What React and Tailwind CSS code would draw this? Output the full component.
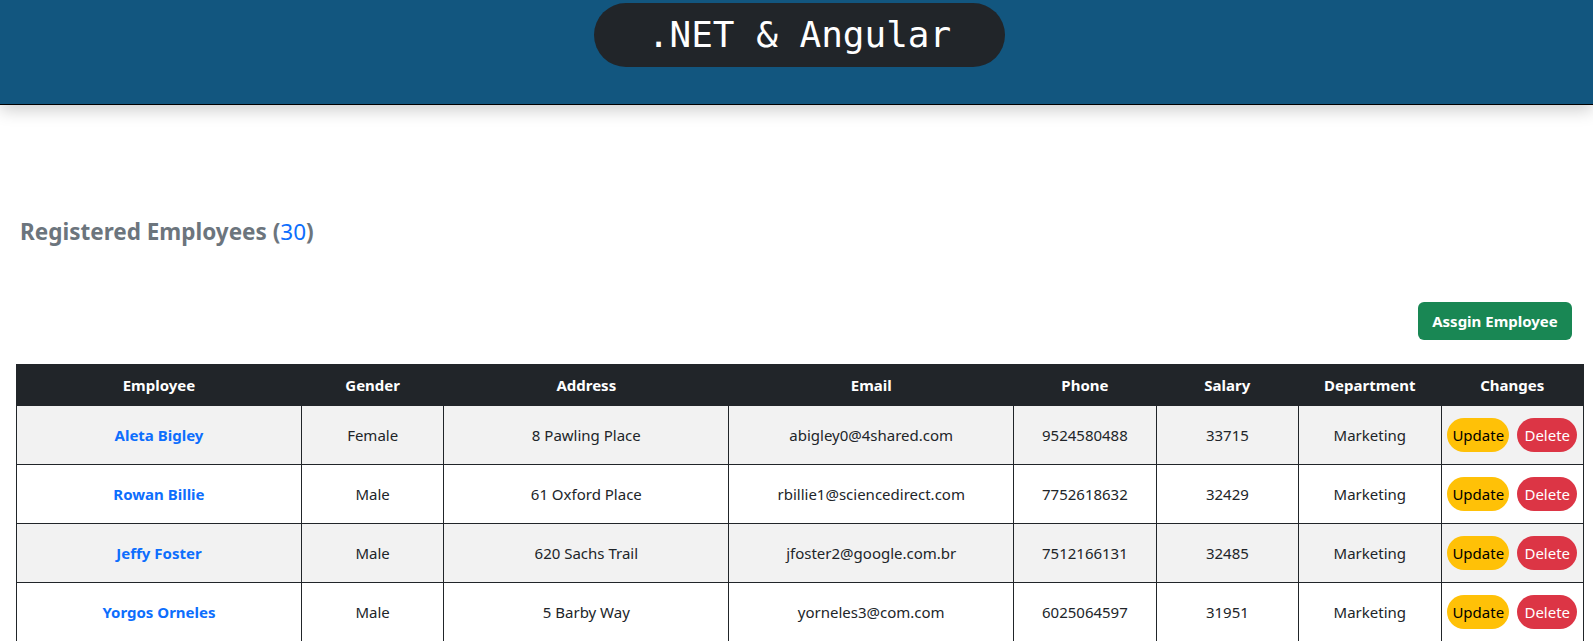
import React from "react";

const rows = [
  ["Aleta Bigley", "Female", "8 Pawling Place", "abigley0@4shared.com", "9524580488", "33715", "Marketing"],
  ["Rowan Billie", "Male", "61 Oxford Place", "rbillie1@sciencedirect.com", "7752618632", "32429", "Marketing"],
  ["Jeffy Foster", "Male", "620 Sachs Trail", "jfoster2@google.com.br", "7512166131", "32485", "Marketing"],
  ["Yorgos Orneles", "Male", "5 Barby Way", "yorneles3@com.com", "6025064597", "31951", "Marketing"],
];

const heads = ["Employee", "Gender", "Address", "Email", "Phone", "Salary", "Department", "Changes"];
const widths = ["18.1818%", "9.0909%", "18.1818%", "18.1818%", "9.0909%", "9.0909%", "9.0909%", "9.0909%"];

export default function App() {
  return (
    <div className="min-h-[641px] bg-white text-[#212529]" style={{ fontFamily: '"Noto Sans", "Open Sans", sans-serif' }}>
      <header className="relative z-10 h-[105px] bg-[#12567f] border-b border-black shadow-[0_5px_16px_rgba(0,0,0,0.2)] flex justify-center">
        <div className="mt-[3px] ml-[6px] h-[64px] w-[411px] rounded-full bg-[#212529] flex items-center justify-center">
          <span className="text-white text-[36px] leading-none" style={{ fontFamily: '"DejaVu Sans Mono", "Liberation Mono", monospace' }}>
            .NET &amp; Angular
          </span>
        </div>
      </header>

      <main>
        <h4 className="mt-[112px] ml-[20px] text-[22.5px] leading-[29px] font-bold text-[#6c757d]">
          Registered Employees (<span className="text-[#0d6efd] font-normal">30</span>)
        </h4>

        <div className="flex justify-end mt-[56px] mr-[21px]">
          <button className="h-[38px] w-[154px] rounded-[6px] bg-[#198754] text-white text-[15px] font-bold">
            Assgin Employee
          </button>
        </div>

        <table className="mt-[24px] ml-[16px] w-[1568px] table-fixed border-collapse text-[15px]">
          <colgroup>
            {widths.map((w, i) => (
              <col key={i} style={{ width: w }} />
            ))}
          </colgroup>
          <thead>
            <tr className="h-[41px] bg-[#212529] text-white">
              {heads.map((h) => (
                <th key={h} className="border border-[#212529] font-bold text-[15px] text-center align-middle">
                  {h}
                </th>
              ))}
            </tr>
          </thead>
          <tbody>
            {rows.map((r, i) => (
              <tr key={r[0]} className={`h-[59px] ${i % 2 === 0 ? "bg-[#f2f2f2]" : "bg-white"}`}>
                <td className="border border-[#212529] text-center align-middle font-bold text-[#0d6efd]">{r[0]}</td>
                {r.slice(1).map((c, j) => (
                  <td key={j} className="border border-[#212529] text-center align-middle">
                    {c}
                  </td>
                ))}
                <td className="border border-[#212529] align-middle">
                  <div className="flex items-center justify-center gap-[8px]">
                    <button className="h-[34px] w-[62px] rounded-full bg-[#ffc107] text-black text-[15px]">Update</button>
                    <button className="h-[34px] w-[60px] rounded-full bg-[#dc3545] text-white text-[15px]">Delete</button>
                  </div>
                </td>
              </tr>
            ))}
          </tbody>
        </table>
      </main>
    </div>
  );
}
